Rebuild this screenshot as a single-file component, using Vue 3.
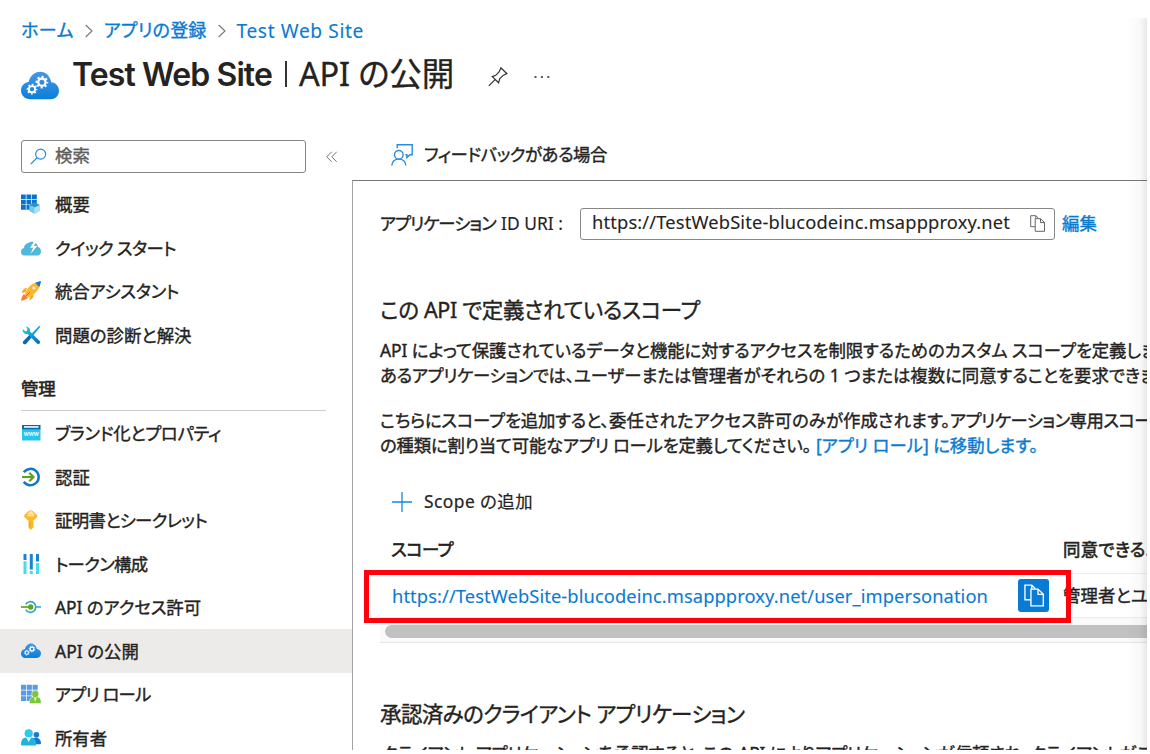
<script setup>
import { nextTick } from 'vue'

// Spreads a text run evenly so that it occupies the given width in pixels.
const vFit = {
  mounted(el, { value }) {
    const apply = () => {
      el.style.letterSpacing = '0px'
      const count = [...el.textContent].length
      el.style.letterSpacing = `${(value - el.getBoundingClientRect().width) / count}px`
    }
    nextTick(apply)
    document.fonts?.ready.then(apply)
  },
}

const gear = (x, y, r) => `<g transform="translate(${x} ${y})" fill="none" stroke="#fff">
  <circle r="${r * 0.58}" stroke-width="${r * 0.36}"/>
  <circle r="${r * 0.86}" stroke-width="${r * 0.3}" stroke-dasharray="${r * 0.338}" stroke-dashoffset="${r * 0.17}"/></g>`
const cloud = (id) => `<defs><linearGradient id="${id}" x1="0" y1="0" x2="0" y2="1"><stop offset="0" stop-color="#4a96e3"/><stop offset="1" stop-color="#0a7fd9"/></linearGradient></defs>
  <path fill="url(#${id})" d="M5 17C2.2 17 0 15.2 0 12.4C0 10 1.7 8.2 4 7.9C4.7 5 7 2.5 10.1 2.5C13.2 2.5 15.4 5 15.9 8C18.2 8.2 20 10 20 12.5C20 15.2 18 17 15.3 17Z"/>
  ${gear(11, 8, 3.3)}${gear(5.8, 11.7, 2.8)}`

const icons = {
  overview: `<path fill="#0a74cc" d="M0 .5h4.8v4.6H0zM5.5.5h4.8v4.6H5.5zM11 .5h4.8v4.6H11zM0 5.8h4.8v4.6H0zM5.5 5.8h4.8v4.6H5.5zM11 5.8h4.8v4.6H11zM0 11.1h4.8v4.6H0zM5.5 11.1h4.8v4.6H5.5z"/>
    <path fill="#2d95c6" d="M8.3 11l5.4-2.8L19 11l-5.2 2.7z"/><path fill="#6fcbe8" d="M8.3 11l5.5 2.7V20L8.3 17z"/><path fill="#a7e1f3" d="M13.8 13.7L19 11v6l-5.2 3z"/>`,
  quick: `<path fill="#51b7dd" d="M3.5 17.5C1.3 17.5 0 15.9 0 13.9C0 11.9 1.2 10.5 3 10.1C2.9 7.7 4.5 5.5 6.8 5.2C8.4 3.4 12 3 14 4.8C15.8 5.4 16.8 7.1 16.8 9.1C19 9.5 20 11.3 20 13.5C20 15.8 18.6 17.5 16.4 17.5Z"/><path fill="#fff" d="M12.8 4L9.1 9.8h3.1L9.5 16l6.7-7.9h-3.4L15.3 4z"/>`,
  rocket: `<path fill="#f9a926" d="M6 7C3.7 6.8 1.6 8.8.5 12l4.3-1zM12.5 13.8c.4 2.3-1.1 4.2-4.1 5.8l.4-4.4z"/><path fill="#ffb52e" d="M4 13C6 7 10 3 15 1.5l3.8 3.8C16.8 10 13 14.4 7 16.5z"/><path fill="#1875c9" d="M14.2 1.8C16.2.8 18.4.3 20 0C19.8 2 19.2 4 18.2 6z"/><circle cx="12.9" cy="7" r="2.1" fill="#fff4dc" stroke="#f19b1d" stroke-width=".6"/><path fill="#f77f2a" d="M2.8 12.7l4.4 4.2L3 19.1l-3 .9.8-3.5z"/><path stroke="#e65a20" stroke-width="1" d="M4.5 15.6L8.7 11.3"/>`,
  tools: `<defs><linearGradient id="tg" x1="0" y1="0" x2=".8" y2="1"><stop stop-color="#2cd0f2"/><stop offset="1" stop-color="#0871b8"/></linearGradient></defs>
    <path fill="#12a5dc" d="M18.3.8l1 .9-6.9 8.6-1.9-1.5z"/><path fill="#0b69ac" d="M9 9.2l2.5 2.2-6.1 7.1c-1 1.1-2.2 1.1-3 .3s-.8-2 .1-2.9z"/><path fill="url(#tg)" d="M4.6 1.2L7 2.2c1.7.8 2.4 2.5 2 4.3l9.6 9.4c.8 1 .6 2-.1 2.6s-1.7.7-2.5-.1L6.7 8.9C4.9 9.3 3 8.6 2.1 7 1.6 6.1 1.4 5 1.7 3.9l2.5 2.4 1.8-.4.4-1.8z"/>`,
  brand: `<path fill="#29c4ea" d="M1 6h18.5v11.5H1z"/><path fill="#0a69b7" d="M1 2h18.5v4.3H1z"/><path fill="#e8f7ff" d="M3 3.1h14.5v1.7H3z"/><text x="10.25" y="13.4" text-anchor="middle" fill="#fff" font-family="Lato, sans-serif" font-weight="700" font-size="6.8" textLength="15" lengthAdjust="spacingAndGlyphs">www</text>`,
  auth: `<path fill="none" stroke="#1177cd" stroke-width="2.5" d="M2.8 5.3A8.2 8.2 0 1 1 2.8 14.8"/><path fill="none" stroke="#57a51c" stroke-width="2.2" d="M1 10h11M8.3 5.8l4.2 4.2-4.2 4.2"/>`,
  key: `<path fill="#fbb829" d="M8.1.8c1-.8 2.2-.8 3.2 0l4.2 3.7c.9.9 1 2 .1 3l-3.3 3.2v1.5l.7.7-.9 1.1.9 1-.9 1.1.7.8-2.9 3-2.4-2.3V10.7L3.9 7.5c-1-1-.9-2.1 0-3z"/><path fill="none" stroke="#fff4cf" stroke-width="1.1" d="M6.3 5.8h7M9.8 1.6L7.5 3.9h4.7z"/><path stroke="#e49b1d" stroke-width=".8" d="M9 11.7v5.7"/>`,
  token: `<path fill="#1585d6" d="M2.5 0h3v6h-3zM8.8 0h3v15.5h-3zM15 0h3v7.5h-3z"/><path fill="#45dcef" d="M2.5 7.3h3V20h-3zM8.8 17h3v3h-3zM15 9h3v11h-3z"/>`,
  permission: `<path fill="none" stroke="#37a3cc" stroke-width="1.7" d="M4.8 7.4A5.3 5.3 0 1 1 4.8 12.6M15 10h5"/><path stroke="#5ea719" stroke-width="1.7" d="M0 10h9"/><circle cx="9.7" cy="10" r="2.7" fill="#5ea719"/>`,
  expose: cloud('cg1'),
  roles: `<path fill="#569be8" d="M0 .8h5.1v4.9H0zM5.8.8h5.1v4.9H5.8zM11.6.8h5.1v4.9h-5.1zM0 6.5h5.1v4.9H0zM5.8 6.5h5.1v4.9H5.8zM11.6 6.5h5.1v4.9h-5.1zM0 12.2h5.1v4.9H0zM5.8 12.2h5.1v4.9H5.8z"/><path fill="#78c83a" stroke="#fff" stroke-width=".5" d="M8.3 18.7c0-3.7 1.8-5.5 3.8-6a3.5 3.5 0 1 1 4.4 0c2.2.5 3.7 2.4 3.7 6q0 .8-.9.8H9.2q-.9 0-.9-.8z"/><path fill="#d9f3bf" d="M12.6 13.2h3.4L14.2 18z"/>`,
  owners: `<circle cx="15.4" cy="6.8" r="2.8" fill="#1878d0"/><path fill="#1878d0" d="M12 10.3c4-1.5 8 .3 8 5q0 .9-.9.9h-6z"/><circle cx="7.7" cy="5.4" r="4.1" fill="#30c9ec"/><path fill="#20b4da" d="M0 16.5c0-4.7 2.2-6.9 5.1-7.1l2.6 3.8 2.5-3.8c2.9.3 5 2.5 5 7.1q0 1-1 1H1q-1 0-1-1z"/><path fill="#d9f7ff" d="M5.5 9.5h4.3l-2.2 4.8z"/>`,
}

const copyGlyph = 'M5.2 11.7H.7V.7h5.1l2.6 2.5M5.8.7v2.7M5.2 3.7h5.3l4 3.8v8.8H5.2zM10.5 3.7v3.9h4'
const bigCloud = cloud('cg2')

const mainNav = [
  ['overview', '概要', 35],
  ['quick', 'クイック スタート', 121],
  ['rocket', '統合アシスタント', 124],
  ['tools', '問題の診断と解決', 136.5],
]
const manageNav = [
  ['brand', 'ブランド化とプロパティ', 166],
  ['auth', '認証', 35],
  ['key', '証明書とシークレット', 152],
  ['token', 'トークン構成', 92.5],
  ['permission', 'API のアクセス許可', 146],
  ['expose', 'API の公開', 84],
  ['roles', 'アプリ ロール', 95.5],
  ['owners', '所有者', 52],
]
const groups = [
  { id: 'main', items: mainNav },
  { id: 'manage', title: '管理', items: manageNav },
]
</script>

<template>
  <div class="portal">
    <nav class="crumbs">
      <a v-fit="53">ホーム</a>
      <svg class="chev" viewBox="0 0 8 14"><path d="M.7 1l6.3 6-6.3 6" /></svg>
      <a v-fit="102.5">アプリの登録</a>
      <svg class="chev" viewBox="0 0 8 14"><path d="M.7 1l6.3 6-6.3 6" /></svg>
      <a v-fit="127.5">Test Web Site</a>
    </nav>

    <header class="title">
      <svg class="title-icon" viewBox="0 0 20 20" v-html="bigCloud"></svg>
      <h1>
        <strong v-fit="200">Test Web Site</strong>
        <i></i>
        <span v-fit="155">API の公開</span>
      </h1>
      <svg class="pin" viewBox="0 0 20 20"><path d="M.8 18.8l6-6M4.3 9.6l6.3 6.2 1.1-4 3.4-3.4 3.8-1.8-6-5.8-1.7 3.9-3.4 3.6zM12.8.8l6.1 5.9" /></svg>
      <svg class="dots" viewBox="0 0 16 4"><path d="M.5 1h2v2h-2zM6.9 1h2v2h-2zM13.3 1h2v2h-2z" /></svg>
    </header>

    <div class="body">
      <aside>
        <div class="search-row">
          <div class="search">
            <svg viewBox="0 0 18 18"><circle cx="11.3" cy="6.5" r="5.3" /><path d="M7.5 10.3L.8 17" /></svg>
            <span v-fit="35">検索</span>
          </div>
          <svg class="collapse" viewBox="0 0 12 12"><path d="M5.7.8L.8 5.8l4.9 5M10.7.8l-4.9 5 4.9 5" /></svg>
        </div>
        <section v-for="g in groups" :key="g.id">
          <h2 v-if="g.title"><span v-fit="34.5">{{ g.title }}</span></h2>
          <ul>
            <li v-for="[icon, label, w] in g.items" :key="icon" :class="{ active: icon === 'expose' }">
              <svg viewBox="0 0 20 20" v-html="icons[icon]"></svg>
              <span v-fit="w">{{ label }}</span>
            </li>
          </ul>
        </section>
      </aside>

      <main>
        <div class="toolbar">
          <svg class="feedback" viewBox="0 0 22 22"><circle cx="7.8" cy="10.8" r="4.3" /><path d="M.7 21.5c.5-4 3.2-6.4 7.1-6.4s6.7 2.4 7.1 6.4M6.2 4.3V.7h15v10h-2.4l-2.9 2.8v-2.8h-1.6" /></svg>
          <span v-fit="183">フィードバックがある場合</span>
        </div>
        <div class="panel">
          <div class="uri-row">
            <label><span v-fit="115.5">アプリケーション</span><span class="colon" v-fit="62">ID URI :</span></label>
            <div class="uri">
              <span v-fit="418">https://TestWebSite-blucodeinc.msappproxy.net</span>
              <svg viewBox="0 0 15 17"><path :d="copyGlyph" /></svg>
            </div>
            <a v-fit="35">編集</a>
          </div>

          <h3><span v-fit="320">この API で定義されているスコープ</span></h3>
          <p>
            <span v-fit="777">API によって保護されているデータと機能に対するアクセスを制限するためのカスタム スコープを定義しま</span><br />
            <span v-fit="194">あるアプリケーションでは、</span><span v-fit="582">ユーザーまたは管理者がそれらの 1 つまたは複数に同意することを要求できま</span>
          </p>
          <p>
            <span v-fit="229">こちらにスコープを追加すると、</span><span v-fit="341">委任されたアクセス許可のみが作成されます。</span><span v-fit="201">アプリケーション専用スコー</span><br />
            <span v-fit="431">の種類に割り当て可能なアプリ ロールを定義してください。</span><a class="move" v-fit="222">[アプリ ロール] に移動します。</a>
          </p>

          <div class="add">
            <svg viewBox="0 0 20 20"><path d="M10 0v20M0 10h20" /></svg>
            <span v-fit="109">Scope の追加</span>
          </div>

          <div class="table">
            <div class="tr head">
              <b v-fit="62">スコープ</b>
              <b v-fit="100">同意できるユ</b>
            </div>
            <div class="tr">
              <a v-fit="596">https://TestWebSite-blucodeinc.msappproxy.net/user_impersonation</a>
              <button><svg viewBox="0 0 15 17"><path :d="copyGlyph" /></svg></button>
              <span class="who" v-fit="85">管理者とユ</span>
            </div>
            <div class="scroll"><div></div></div>
            <div class="highlight"></div>
          </div>

          <h3 class="second"><span v-fit="364.5">承認済みのクライアント アプリケーション</span></h3>
          <p class="last"><span v-fit="786">クライアント アプリケーションを承認すると、この API によりアプリケーションが信頼され、クライアントがこの</span></p>
        </div>
      </main>
    </div>
    <div class="edge"></div>
  </div>
</template>

<style>
body { margin: 0; background: #fff; overflow: hidden; }
</style>

<style scoped>
.portal {
  position: relative;
  width: 1147px;
  height: 750px;
  overflow: hidden;
  background: #fff;
  color: #242321;
  font: 17.4px/24px "Noto Sans", "Noto Sans CJK JP", sans-serif;
  font-feature-settings: "palt";
  -webkit-text-stroke: 0.38px currentColor;
}
* { box-sizing: border-box; }
span, a, b, strong, label { display: inline-block; white-space: nowrap; }
a { color: #0a7bd1; }
svg { flex: none; overflow: visible; }
h1, h2, h3, p, ul { margin: 0; padding: 0; font-weight: 400; }

.crumbs { display: flex; align-items: center; height: 24px; margin: 18px 0 0 21px; font-size: 18px; }
.crumbs a:last-child { margin-top: 1px; font-size: 19.2px; -webkit-text-stroke-width: 0.1px; }
.chev { width: 8px; height: 14px; margin: 2px 11px 0; fill: none; stroke: #777; stroke-width: 1.1; }

.title { display: flex; align-items: center; height: 44px; margin: 10px 0 0 21px; }
.title-icon { width: 38px; height: 38px; margin-top: 24px; }
h1 { display: flex; align-items: center; margin-left: 13px; font-size: 32.5px; line-height: 44px; -webkit-text-stroke-width: 0.3px; }
h1 strong { margin-top: 1px; font-family: Inter, sans-serif; font-size: 32px; font-weight: 600; -webkit-text-stroke-width: 0; }
h1 i { width: 2px; height: 26px; margin: 0 12px 0 13px; background: #333; }
.pin { width: 20px; height: 20px; margin: 6px 0 0 34px; fill: none; stroke: #333; stroke-width: 1.2; }
.dots { width: 16px; height: 4px; margin: 6px 0 0 26px; fill: #555; }

.body { display: flex; margin-top: 34px; height: 620px; }
aside { width: 352px; flex: none; padding-top: 10px; }
.search-row { display: flex; align-items: center; padding-left: 21px; height: 33px; }
.search { display: flex; align-items: center; width: 285px; height: 33px; border: 1px solid #858482; border-radius: 3px; padding-left: 8px; color: #605e5c; }
.search svg { width: 17px; height: 17px; margin-right: 8px; fill: none; stroke: #2588d8; stroke-width: 1.2; }
.search span { margin-top: -4px; }
.collapse { width: 12px; height: 12px; margin-left: 20px; fill: none; stroke: #777; stroke-width: 1; }
ul { list-style: none; padding-top: 9.5px; }
h2 { margin: 19.5px 26px 0 21px; height: 35px; border-bottom: 1px solid #cfcdcb; font-size: 17.4px; line-height: 24px; -webkit-text-stroke-width: 0.6px; }
h2 + ul { padding-top: 0.5px; }
li { display: flex; align-items: center; height: 43.5px; padding-left: 21px; }
li svg { width: 20px; height: 20px; margin-right: 14px; -webkit-text-stroke-width: 0; }
li span { margin-top: -0.5px; }
.active { background: #edebe9; }

main { width: 795px; flex: none; }
.toolbar { display: flex; align-items: center; height: 50px; padding-left: 39px; }
.toolbar svg { width: 22px; height: 22px; margin-right: 11px; fill: none; stroke: #2b8bdc; stroke-width: 1.4; }
.toolbar span { margin-top: -2px; }
.panel { height: 570px; padding-left: 27px; border-left: 1px solid #a2a2a2; border-top: 1px solid #777; overflow: hidden; }
.uri-row { display: flex; align-items: center; height: 32px; margin-top: 27px; }
.uri-row label, .uri-row > a { margin-top: -2px; }
.colon { margin-left: 5.5px; -webkit-text-stroke-width: 0.15px; }
.uri { display: flex; align-items: center; width: 475px; height: 32px; margin: 0 7px 0 17px; padding-left: 11px; border: 1px solid #8a8886; border-radius: 3px; font-size: 18.3px; -webkit-text-stroke-width: 0.1px; }
.uri span { margin-top: -4px; }
.uri svg { width: 15px; height: 17px; margin: -2px 0 0 20px; fill: none; stroke: #666; stroke-width: 1; }
h3 { height: 30px; margin-top: 55px; font-size: 21.5px; line-height: 30px; }
p { margin-top: 13px; height: 50px; line-height: 25px; white-space: nowrap; }
p + p { margin-top: 20px; }
.move { margin-left: 5px; }
.add { display: flex; align-items: center; height: 24px; margin: 32px 0 0 12px; }
.add svg { width: 20px; height: 20px; margin-right: 12px; fill: none; stroke: #1b86dc; stroke-width: 1.3; }
.add span { margin-top: -2px; -webkit-text-stroke-width: 0.2px; }
.table { position: relative; margin-top: 23px; }
.tr { display: flex; align-items: center; height: 44px; padding-left: 12px; border-bottom: 1px solid #ececec; }
.tr a { font-size: 18.3px; -webkit-text-stroke-width: 0.1px; }
.tr .who { margin-top: -2px; }
.tr.head { height: 37px; padding: 0 0 12px 11px; border-bottom: 1px solid #ececec; }
.head b { font-weight: 400; -webkit-text-stroke-width: 0.6px; }
.head b + b { margin-left: 610px; }
.tr button { display: flex; align-items: center; justify-content: center; flex: none; width: 31px; height: 33px; margin: -1px 14px 0 30px; padding: 0; border: 0; border-radius: 3px; background: #0a7bd4; }
.tr button svg { width: 20px; height: 23px; fill: none; stroke: #fff; stroke-width: 1; }
.scroll { height: 25px; padding: 7px 0 0 5px; background: #fafafa; border-bottom: 1px solid #e5e5e5; }
.scroll div { height: 13px; border-radius: 7px 0 0 7px; background: #c1c1c1; }
.highlight { position: absolute; left: -16px; top: 33px; width: 707px; height: 53px; border: 5px solid #ff000d; }
h3.second { margin-top: 56px; }
.last { margin: 12px 0 0 2px; }
.edge { position: absolute; top: 18px; right: 0; bottom: 0; width: 21px; background: linear-gradient(to right, rgba(0, 0, 0, 0), rgba(0, 0, 0, 0.025) 65%, rgba(0, 0, 0, 0.09)); }
</style>
